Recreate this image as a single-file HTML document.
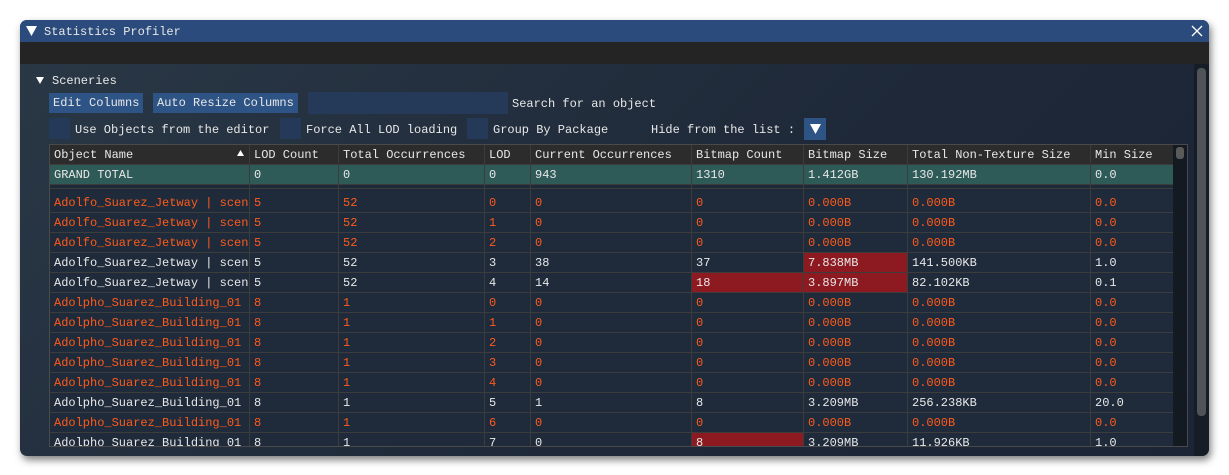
<!DOCTYPE html><html><head><style>
*{margin:0;padding:0;box-sizing:border-box}
body{width:1229px;height:475px;background:#fff;position:relative;overflow:hidden;font-family:"Liberation Mono","DejaVu Sans Mono",monospace;font-size:12px;color:#e8e8e8}
.a{position:absolute;white-space:nowrap}
#win{left:20px;top:20px;width:1189px;height:436px;border-radius:7px;background:linear-gradient(135deg,#2a3846,#1e2838 60%,#1c2535);box-shadow:2px 4px 8px rgba(0,0,0,.5);overflow:hidden}
.btn{background:#2e5486;height:20px;line-height:21px;padding:0 4px}
.chk{background:#243a58;width:21px;height:21px}
.cell{position:absolute;height:20px;line-height:21px;padding-left:4px;overflow:hidden;white-space:nowrap;border-right:1px solid #3c3c3c;border-bottom:1px solid #3c3c3c}
.o{color:#ff5a1a}
.r{background:#8c1a20}
</style></head><body>
<div id="win" class="a">
 <div class="a" style="left:0;top:0;width:1189px;height:22px;background:#2b4b7c"></div>
 <svg class="a" style="left:6px;top:6px" width="12" height="11"><path d="M0 0H11L5.5 10Z" fill="#fff"/></svg>
 <div class="a" style="left:24px;top:5px">Statistics Profiler</div>
 <svg class="a" style="left:1171px;top:5px" width="12" height="12"><path d="M1 1L11 11M11 1L1 11" stroke="#fff" stroke-width="1.3"/></svg>
 <div class="a" style="left:0;top:22px;width:1189px;height:22px;background:#242424"></div>
 <div class="a" style="left:1174px;top:44px;width:15px;height:392px;background:#161d26"></div>
 <div class="a" style="left:1177px;top:48px;width:9px;height:348px;background:#505458;border-radius:4px"></div>
 <svg class="a" style="left:16px;top:57px" width="8" height="7"><path d="M0 0H8L4 7Z" fill="#fff"/></svg>
 <div class="a" style="left:32px;top:54px">Sceneries</div>
 <div class="a btn" style="left:29px;top:73px">Edit Columns</div>
 <div class="a btn" style="left:133px;top:73px">Auto Resize Columns</div>
 <div class="a" style="left:288px;top:72px;width:200px;height:22px;background:#243a58"></div>
 <div class="a" style="left:492px;top:77px">Search for an object</div>
 <div class="a chk" style="left:29px;top:98px"></div><div class="a" style="left:55px;top:103px">Use Objects from the editor</div>
 <div class="a chk" style="left:260px;top:98px"></div><div class="a" style="left:286px;top:103px">Force All LOD loading</div>
 <div class="a chk" style="left:447px;top:98px"></div><div class="a" style="left:473px;top:103px">Group By Package</div>
 <div class="a" style="left:631px;top:103px">Hide from the list :</div>
 <div class="a" style="left:784px;top:98px;width:22px;height:22px;background:#2e5486"></div>
 <svg class="a" style="left:790px;top:104px" width="11" height="10"><path d="M0 0H11L5.5 10Z" fill="#fff"/></svg>
 <div class="a" id="tb" style="left:29px;top:124px;width:1139px;height:303px;border:1px solid #4a4a4a;overflow:hidden">
  <div class="a" style="left:1123px;top:0;width:15px;height:303px;background:#141a22"></div>
  <div class="a" style="left:1126px;top:2px;width:8px;height:12px;background:#5a5a5a;border-radius:3px"></div>
 </div>
</div>
<script>
const cols=[0,200,289,435,481,642,754,858,1041,1124];
const hdr=["Object Name","LOD Count","Total Occurrences","LOD","Current Occurrences","Bitmap Count","Bitmap Size","Total Non-Texture Size","Min Size"];
const tb=document.getElementById('tb');let h='';
function row(y,vals,bg,cls,reds){for(let i=0;i<9;i++){let w=cols[i+1]-cols[i];let r=reds&&reds.includes(i)?' r':'';h+=`<div class="cell ${cls||''}${r}" style="left:${cols[i]}px;top:${y}px;width:${w}px;background:${r?'':bg}">${vals[i]}</div>`}}
row(0,hdr,'#2c2c2c');
h+='<svg class="a" style="left:187px;top:5px" width="7" height="6"><path d="M0 6H7L3.5 0Z" fill="#fff"/></svg>';
row(20,["GRAND TOTAL","0","0","0","943","1310","1.412GB","130.192MB","0.0"],'#2e5a58');
row(40,["","","","","","","","",""],'#1e2a3a');
h+=`<div class="a" style="left:0;top:43px;width:1123px;height:1px;background:#3c3c3c"></div>`;
const A="Adolfo_Suarez_Jetway | scenery",B="Adolpho_Suarez_Building_01";
const Z=["0","0.000B","0.000B","0.0"];
const rows=[
[A,"5","52","0","0",...Z,1],[A,"5","52","1","0",...Z,1],[A,"5","52","2","0",...Z,1],
[A,"5","52","3","38","37","7.838MB","141.500KB","1.0",0,[6]],
[A,"5","52","4","14","18","3.897MB","82.102KB","0.1",0,[5,6]],
[B,"8","1","0","0",...Z,1],[B,"8","1","1","0",...Z,1],[B,"8","1","2","0",...Z,1],[B,"8","1","3","0",...Z,1],[B,"8","1","4","0",...Z,1],
[B,"8","1","5","1","8","3.209MB","256.238KB","20.0",0],
[B,"8","1","6","0",...Z,1],
[B,"8","1","7","0","8","3.209MB","11.926KB","1.0",0,[5]]];
rows.forEach((r,i)=>row(48+20*i,r.slice(0,9),'#1f2b3b',r[9]?'o':'',r[10]));
tb.insertAdjacentHTML('afterbegin',h);
</script>
</body></html>
